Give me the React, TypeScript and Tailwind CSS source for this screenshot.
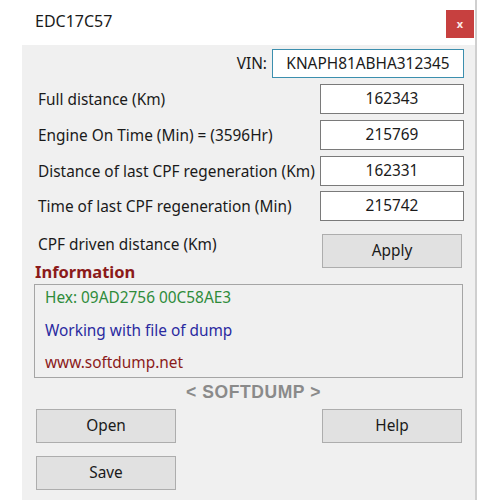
import React from "react"

const font = { fontFamily: '"Noto Sans", "Open Sans", sans-serif' }

function Field({ label, value, mt }: { label: string; value: string; mt: string }) {
  return (
    <div className={`flex items-center justify-between pl-[16px] pr-[11px] ${mt}`}>
      <span className="text-[15.4px] text-[#1a1a1a] mt-[2px]">{label}</span>
      <div className="w-[144px] h-[30px] bg-white border border-[#7a7a7a] flex items-center justify-center text-[15.4px] text-[#1a1a1a]">
        {value}
      </div>
    </div>
  )
}

function Btn({ children }: { children: React.ReactNode }) {
  return (
    <div className="w-[140px] h-[34px] bg-[#e1e1e1] border border-[#adadad] flex items-center justify-center text-[15.4px] text-[#1a1a1a]">
      {children}
    </div>
  )
}

export default function App() {
  return (
    <div className="w-[500px] h-[500px] bg-white flex overflow-hidden" style={font}>
      <div className="ml-[22px] w-[455px] h-full flex flex-col border-r-2 border-[#cfcfcf]">
        {/* title bar */}
        <div className="h-[45px] bg-white flex items-start justify-between">
          <span className="mt-[9px] ml-[13px] text-[16px] text-[#1a1a1a]">EDC17C57</span>
          <div className="mt-[10px] mr-[1px] w-[28px] h-[28px] bg-[#c7403f] flex items-center justify-center text-[#fbe9e9] text-[11px] font-bold">
            x
          </div>
        </div>

        {/* body */}
        <div className="flex-1 bg-[#f0f0f0] flex flex-col">
          <div className="flex items-center justify-end pr-[11px] mt-[4px]">
            <span className="text-[15.4px] text-[#1a1a1a] mr-[5px]">VIN:</span>
            <div className="w-[192px] h-[29px] bg-white border border-[#3c8fae] flex items-center justify-center text-[15.4px] text-[#1a1a1a]">
              KNAPH81ABHA312345
            </div>
          </div>

          <Field label="Full distance (Km)" value="162343" mt="mt-[6px]" />
          <Field label="Engine On Time (Min) = (3596Hr)" value="215769" mt="mt-[6px]" />
          <Field label="Distance of last CPF regeneration (Km)" value="162331" mt="mt-[6px]" />
          <Field label="Time of last CPF regeneration (Min)" value="215742" mt="mt-[5px]" />

          <div className="flex items-start justify-between pl-[16px] pr-[13px] mt-[13px]">
            <span className="text-[15.4px] text-[#1a1a1a] mt-[-1px]">CPF driven distance (Km)</span>
            <Btn>Apply</Btn>
          </div>

          <div className="ml-[13px] mt-[-6px] text-[16.5px] font-bold text-[#8b1a1a] leading-[20px]">Information</div>

          <div className="ml-[12px] mr-[12px] mt-[2px] h-[94px] border border-[#a5a5a5] flex flex-col pl-[10px] text-[15.4px]">
            <span className="text-[#2e8b3a] mt-[1px]">Hex: 09AD2756 00C58AE3</span>
            <span className="text-[#2a2aa0] mt-[10px]">Working with file of dump</span>
            <span className="text-[#8b1a1a] mt-[9px]">www.softdump.net</span>
          </div>

          <div className="text-center text-[17.5px] font-bold text-[#8a8a8a] mt-[2px] pl-[10px] tracking-[0.6px] leading-[24px]" style={{ fontFamily: '"Liberation Sans", Arial, sans-serif' }}>
            &lt; SOFTDUMP &gt;
          </div>

          <div className="flex justify-between pl-[14px] pr-[13px] mt-[5px]">
            <Btn>Open</Btn>
            <Btn>Help</Btn>
          </div>
          <div className="pl-[14px] mt-[13px]">
            <Btn>Save</Btn>
          </div>
        </div>
      </div>
    </div>
  )
}
